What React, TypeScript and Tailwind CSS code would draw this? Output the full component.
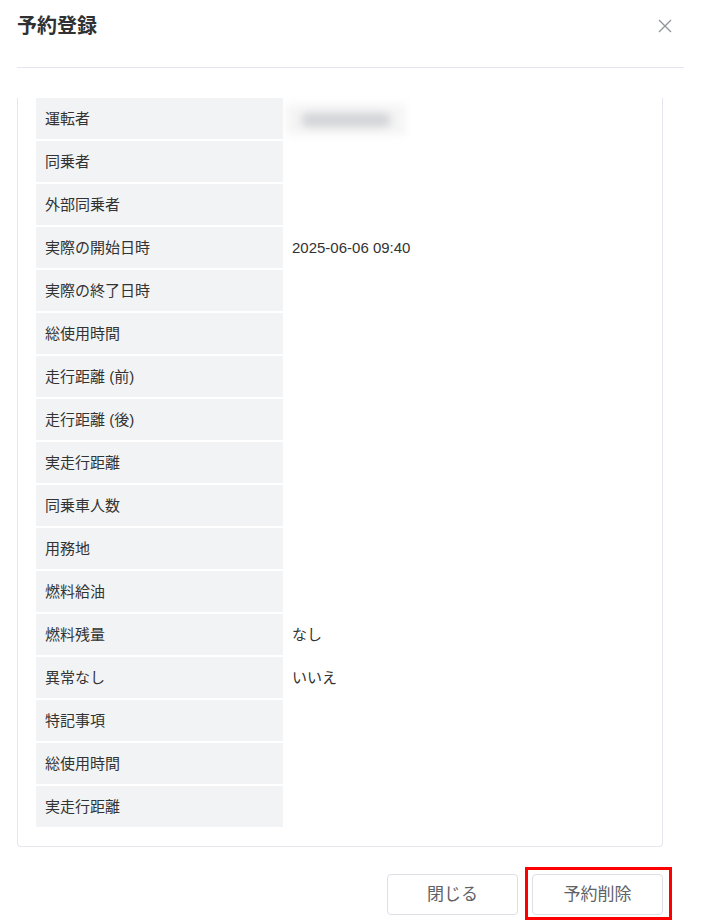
import React from 'react';

interface Row {
  label: string;
  value?: string;
  blurred?: boolean;
}

const rows: Row[] = [
  { label: '運転者', blurred: true },
  { label: '同乗者' },
  { label: '外部同乗者' },
  { label: '実際の開始日時', value: '2025-06-06 09:40' },
  { label: '実際の終了日時' },
  { label: '総使用時間' },
  { label: '走行距離 (前)' },
  { label: '走行距離 (後)' },
  { label: '実走行距離' },
  { label: '同乗車人数' },
  { label: '用務地' },
  { label: '燃料給油' },
  { label: '燃料残量', value: 'なし' },
  { label: '異常なし', value: 'いいえ' },
  { label: '特記事項' },
  { label: '総使用時間' },
  { label: '実走行距離' },
];

const font = { fontFamily: '"Liberation Sans", "Noto Sans CJK JP", sans-serif' };

export default function App() {
  return (
    <div className="w-[701px] h-[923px] bg-white overflow-hidden" style={font}>
      {/* Header */}
      <div className="flex items-center justify-between pl-[17px] pr-[29px] h-[51px]">
        <h2 className="text-[20px] font-bold text-[#303133] leading-none">予約登録</h2>
        <button className="text-[#909399]">
          <svg width="14" height="14" viewBox="0 0 14 14" fill="none">
            <path d="M1 1L13 13M13 1L1 13" stroke="currentColor" strokeWidth="1.3" />
          </svg>
        </button>
      </div>
      <div className="mx-[17px] mt-[16px] h-px bg-[#e4e7ed]" />

      {/* Body (scrolled card) */}
      <div className="mt-[30px] ml-[17px] w-[646px] border-x border-b border-[#e4e7ed] rounded-b-[4px] pl-[18px] pr-[18px] pb-[19px]">
        <div className="flex flex-col gap-[2px]">
          {rows.map((row, i) => (
            <div key={i} className="flex h-[41px] gap-[2px]">
              <div className="w-[247px] shrink-0 bg-[#f2f3f5] flex items-center pl-[9px] pt-[2px] text-[15px] text-[#333333]">
                {row.label}
              </div>
              <div className="flex-1 flex items-center pl-[7px] pt-[2px] text-[15px] text-[#333333]">
                {row.blurred ? (
                  <div className="-ml-[6px] w-[120px] h-[31px] bg-[#f5f5f6] blur-[4px] flex items-center justify-center">
                    <div className="w-[90px] h-[14px] rounded-full bg-[#d3d4d7]" />
                  </div>
                ) : (
                  row.value
                )}
              </div>
            </div>
          ))}
        </div>
      </div>

      {/* Footer */}
      <div className="flex justify-end gap-[14px] mt-[27px] mr-[38px]">
        <button className="w-[131px] h-[41px] rounded-[4px] border border-[#dcdfe6] bg-white text-[17px] text-[#606266]">
          閉じる
        </button>
        <div className="relative">
          <button className="w-[131px] h-[41px] rounded-[4px] border border-[#dcdfe6] bg-white text-[17px] text-[#606266]">
            予約削除
          </button>
          <div className="absolute -left-[7px] -top-[7px] -right-[9px] -bottom-[5px] border-[3px] border-[#ff0000] pointer-events-none" />
        </div>
      </div>
    </div>
  );
}
